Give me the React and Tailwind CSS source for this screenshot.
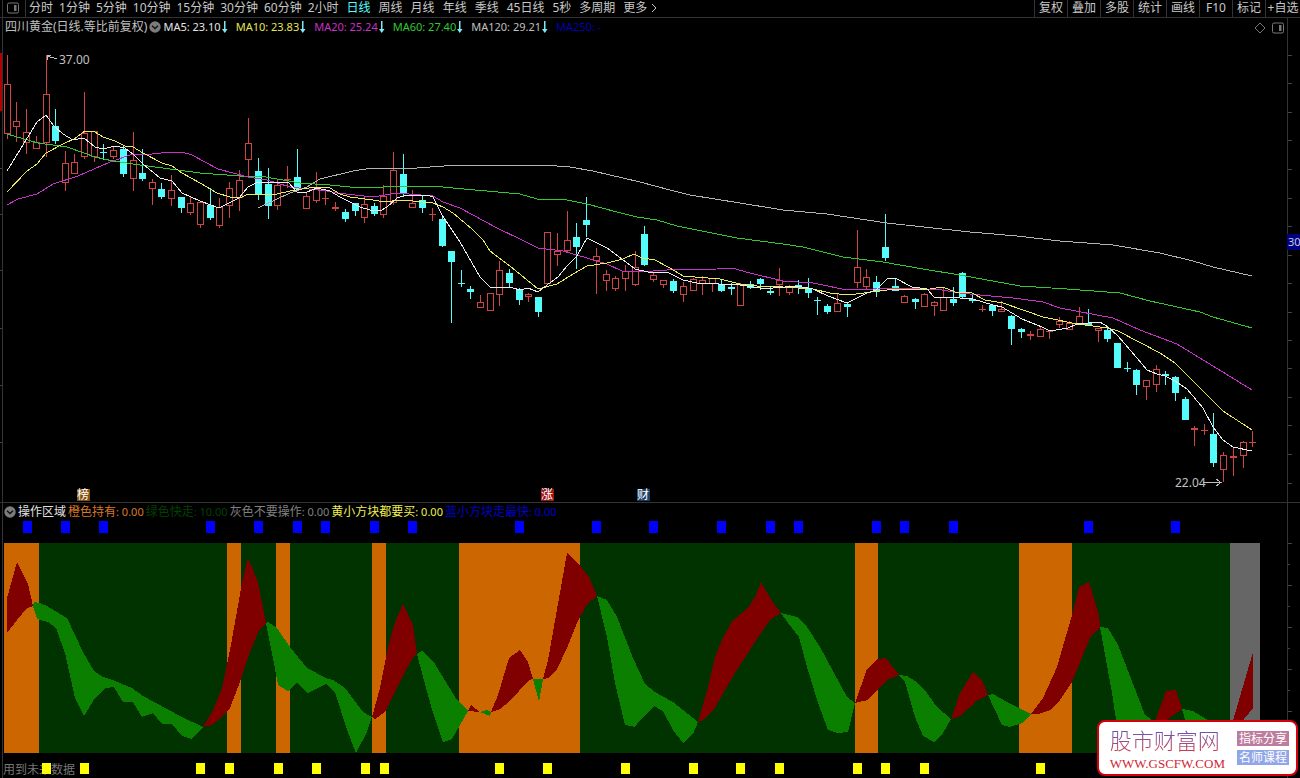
import React from 'react';
import { clsx } from 'clsx';

const RED = '#cf4444';
const CYAN = '#54fcfc';

const MINUTE_TABS = ['分时', '1分钟', '5分钟', '10分钟', '15分钟', '30分钟', '60分钟', '2小时'];
const PERIOD_TABS = ['日线', '周线', '月线', '年线', '季线', '45日线', '5秒', '多周期'];
const TOOLS = ['复权', '叠加', '多股', '统计', '画线', 'F10', '标记', '+自选'];

const AVERAGES = [
  { label: 'MA5: 23.10', color: 'text-[#e6e6e6]', arrow: true },
  { label: 'MA10: 23.83', color: 'text-[#e6e650]', arrow: true },
  { label: 'MA20: 25.24', color: 'text-[#c832c8]', arrow: true },
  { label: 'MA60: 27.40', color: 'text-[#32c832]', arrow: true },
  { label: 'MA120: 29.21', color: 'text-[#c0c0c0]', arrow: true },
  { label: 'MA250: -', color: 'text-[#0000b4]', arrow: false },
];

const SIGNALS = [
  { label: '橙色持有', value: '0.00', color: 'text-[#d97a26]' },
  { label: '绿色快走', value: '10.00', color: 'text-[#004000]' },
  { label: '灰色不要操作', value: '0.00', color: 'text-[#808080]' },
  { label: '黄小方块都要买', value: '0.00', color: 'text-[#f0f050]' },
  { label: '蓝小方块走最快', value: '0.00', color: 'text-[#0000c8]' },
];

// [x, high, body top, body bottom, low, 1 = rising / 0 = falling]
const CANDLES = [
  [7, 55, 84, 134, 139, 1], [16, 102, 121, 127, 142, 1], [26, 109, 132, 143, 154, 1],
  [36, 136, 142, 149, 149, 1], [46, 55, 94, 143, 157, 1], [55, 109, 126, 141, 144, 0],
  [65, 151, 163, 183, 191, 1], [74, 154, 162, 174, 174, 1], [84, 92, 133, 157, 159, 1],
  [94, 131, 131, 157, 162, 1], [103, 144, 152, 153, 160, 0], [113, 147, 150, 157, 159, 1],
  [123, 146, 149, 174, 177, 0], [133, 132, 160, 179, 191, 1], [142, 149, 173, 179, 181, 0],
  [152, 179, 182, 189, 205, 1], [161, 183, 189, 197, 199, 0], [171, 175, 190, 199, 206, 1],
  [181, 197, 197, 208, 213, 0], [190, 197, 203, 213, 215, 1], [200, 201, 202, 225, 228, 1],
  [210, 188, 205, 218, 220, 0], [219, 198, 207, 226, 228, 1], [229, 182, 188, 206, 218, 1],
  [239, 170, 180, 198, 211, 1], [248, 118, 143, 160, 178, 1], [258, 158, 171, 194, 200, 0],
  [268, 168, 184, 206, 219, 0], [277, 180, 185, 206, 210, 1], [287, 166, 179, 180, 188, 1],
  [297, 149, 177, 189, 189, 0], [306, 193, 196, 209, 209, 1], [316, 172, 189, 201, 203, 1],
  [325, 190, 198, 199, 205, 1], [335, 202, 207, 209, 211, 1], [345, 209, 212, 219, 222, 0],
  [355, 203, 203, 211, 216, 0], [364, 196, 204, 218, 223, 1], [374, 203, 206, 214, 216, 0],
  [383, 185, 196, 215, 218, 1], [393, 152, 170, 203, 205, 1], [403, 154, 174, 193, 197, 0],
  [412, 190, 203, 208, 208, 1], [422, 196, 200, 208, 213, 0], [432, 208, 214, 215, 221, 1],
  [442, 217, 219, 246, 247, 0], [451, 251, 251, 262, 323, 0], [461, 270, 283, 284, 287, 0],
  [470, 286, 289, 292, 299, 0], [480, 295, 302, 308, 308, 1], [490, 293, 293, 311, 311, 1],
  [499, 261, 270, 295, 306, 1], [509, 269, 273, 283, 287, 0], [519, 288, 290, 300, 305, 0],
  [528, 293, 294, 297, 302, 1], [538, 297, 297, 312, 317, 0], [547, 232, 232, 284, 284, 1],
  [557, 233, 251, 255, 266, 1], [567, 211, 240, 251, 252, 1], [576, 223, 237, 247, 269, 0],
  [586, 197, 220, 225, 237, 0], [596, 248, 256, 261, 294, 1], [606, 270, 274, 281, 291, 1],
  [615, 276, 278, 289, 291, 1], [625, 265, 271, 279, 291, 1], [635, 251, 267, 285, 286, 1],
  [644, 226, 234, 265, 266, 0], [653, 272, 275, 280, 282, 1], [663, 280, 280, 285, 288, 1],
  [673, 279, 281, 291, 293, 0], [683, 282, 286, 295, 302, 1], [693, 278, 279, 291, 291, 1],
  [702, 276, 280, 284, 295, 1], [712, 278, 278, 284, 292, 1], [721, 279, 284, 291, 292, 0],
  [731, 283, 287, 289, 295, 0], [740, 283, 284, 306, 306, 1], [750, 281, 284, 288, 289, 0],
  [760, 278, 279, 284, 290, 0], [770, 286, 291, 293, 295, 0], [779, 268, 280, 285, 296, 1],
  [789, 285, 287, 293, 295, 1], [798, 280, 285, 288, 294, 0], [808, 278, 289, 293, 298, 0],
  [817, 297, 300, 301, 315, 0], [827, 304, 306, 312, 314, 0], [837, 293, 303, 312, 312, 1],
  [847, 302, 304, 307, 317, 0], [857, 230, 267, 283, 288, 1], [866, 269, 277, 287, 290, 1],
  [876, 276, 282, 292, 297, 0], [885, 214, 247, 258, 261, 0], [895, 278, 286, 291, 291, 0],
  [904, 295, 296, 303, 303, 1], [915, 298, 299, 302, 309, 0], [924, 293, 294, 307, 307, 1],
  [934, 301, 302, 306, 316, 1], [943, 288, 297, 311, 311, 1], [953, 287, 299, 303, 306, 0],
  [962, 272, 273, 297, 299, 0], [972, 293, 299, 301, 303, 0], [982, 305, 309, 310, 312, 1],
  [992, 304, 305, 311, 316, 0], [1001, 301, 309, 312, 312, 1], [1011, 315, 316, 329, 345, 0],
  [1021, 328, 329, 332, 338, 0], [1030, 331, 334, 336, 340, 1], [1040, 327, 329, 337, 337, 1],
  [1049, 330, 331, 332, 339, 1], [1059, 317, 321, 325, 328, 1], [1069, 321, 323, 330, 330, 1],
  [1079, 307, 316, 325, 325, 1], [1088, 309, 323, 325, 326, 0], [1098, 328, 328, 331, 342, 1],
  [1107, 328, 330, 339, 342, 0], [1117, 343, 343, 368, 368, 0], [1127, 362, 368, 369, 372, 0],
  [1136, 369, 370, 385, 395, 0], [1146, 380, 380, 387, 400, 1], [1156, 365, 369, 385, 392, 1],
  [1165, 371, 374, 376, 385, 0], [1175, 376, 377, 393, 401, 0], [1185, 397, 399, 420, 420, 0],
  [1194, 426, 428, 430, 446, 1], [1204, 424, 430, 431, 435, 1], [1213, 413, 434, 463, 467, 0],
  [1223, 452, 455, 470, 482, 1], [1233, 447, 456, 458, 476, 1], [1243, 441, 442, 456, 468, 1],
  [1252, 431, 442, 443, 447, 1],
];

const LINES = [
  {
    name: 'MA120',
    stroke: '#b4b4b4',
    points:
      '258,208 277,199 290,193 307,187 320,179 353,171 372,168 417,168 457,165 543,165 570,167 593,171 610,175 640,182 670,190 690,195 740,203 783,210 827,214 887,223 970,232 1017,236 1060,241 1113,245 1160,253 1193,261 1213,267 1252,276',
  },
  {
    name: 'MA60',
    stroke: '#32c832',
    points:
      '7,134 38,143 67,147 95,157 113,161 140,165 200,173 240,176 260,176 300,183 330,185 350,187 383,187 413,186 433,186 453,188 520,194 537,199 567,200 587,204 617,212 637,217 657,220 677,226 737,238 783,244 803,247 843,257 883,262 923,269 960,275 1020,286 1067,289 1120,293 1150,301 1200,312 1213,317 1252,328',
  },
  {
    name: 'MA20',
    stroke: '#c832c8',
    points:
      '7,205 18,199 37,194 53,184 78,176 110,162 133,154 152,154 170,152 182,152 192,155 218,169 233,173 248,177 267,180 290,187 327,191 337,193 373,197 397,193 433,196 443,202 460,208 497,228 522,240 538,248 563,251 587,258 607,264 622,271 640,272 667,270 717,269 732,268 750,273 783,281 813,283 847,290 900,288 942,290 960,293 980,295 1013,298 1043,302 1060,308 1113,318 1140,330 1177,344 1213,366 1252,390',
  },
  {
    name: 'MA10',
    stroke: '#ecec5a',
    points:
      '7,192 27,171 37,164 46,153 63,144 74,139 85,131 95,132 103,137 115,141 125,146 133,147 143,153 162,163 172,166 182,173 200,183 217,193 230,197 240,198 248,194 277,194 290,191 315,187 330,188 340,194 350,197 373,200 385,202 400,200 413,201 433,203 443,207 453,213 472,229 483,240 490,251 510,266 538,289 557,284 573,274 587,266 607,263 623,259 634,254 642,258 655,260 670,268 683,276 720,279 740,284 757,286 783,287 813,289 830,293 848,295 887,290 930,289 943,287 955,292 972,293 985,300 1003,303 1043,317 1077,324 1108,328 1118,331 1160,353 1175,363 1223,411 1252,430',
  },
  {
    name: 'MA5',
    stroke: '#ececec',
    points:
      '7,171 26,140 37,122 46,115 53,125 63,134 73,140 84,138 95,147 103,149 115,146 125,148 133,154 143,164 160,178 172,181 182,193 200,201 219,208 239,198 248,187 258,182 288,182 297,192 307,192 317,188 330,191 340,197 360,207 370,210 380,211 387,207 397,198 407,195 427,195 433,197 442,215 460,242 480,277 490,287 513,288 520,290 528,288 538,292 547,285 558,277 567,266 577,256 587,238 607,248 622,259 635,269 648,272 667,272 683,280 697,283 740,285 760,288 773,288 797,286 813,289 828,296 847,303 867,293 876,290 887,279 895,278 912,287 927,289 934,297 960,298 973,299 993,305 1002,307 1012,313 1022,319 1042,327 1050,331 1068,328 1077,324 1100,322 1108,327 1118,336 1137,358 1147,370 1157,374 1165,376 1175,381 1187,389 1203,408 1213,427 1223,440 1233,447 1252,451',
  },
];

const BANDS = [
  [4, 39, '#cc6600'],
  [227, 241, '#cc6600'],
  [276, 290, '#cc6600'],
  [372, 386, '#cc6600'],
  [459, 580, '#cc6600'],
  [855, 878, '#cc6600'],
  [1019, 1072, '#cc6600'],
  [1230, 1260, '#666666'],
];

const RISING = [
  '7,598 17,562 28,584 33,606 27,608 17,620 7,633',
  '203,727 213,710 222,688 230,650 242,583 248,558 258,582 266,623 259,630 248,657 240,682 230,708 222,717 212,725',
  '372,717 380,688 388,647 395,622 403,604 413,625 417,654 413,657 402,678 385,712 375,719',
  '468,711 471,705 480,712',
  '491,712 498,695 509,658 520,650 528,662 533,679 529,680 510,701 500,709',
  '543,679 548,660 567,553 578,563 589,577 597,596 587,604 577,623 567,648 557,669 548,678',
  '698,722 708,687 715,657 722,640 732,621 748,608 755,597 761,582 772,601 781,613 770,620 755,642 735,673 713,711 703,720',
  '855,703 867,669 878,659 886,658 899,675 887,680 868,700',
  '951,719 960,693 973,672 982,680 988,695 978,700 960,716',
  '1031,714 1043,698 1057,667 1072,615 1079,587 1089,582 1099,615 1100,627 1090,638 1072,682 1060,700 1050,710 1038,714',
  '1155,721 1166,691 1176,690 1182,709 1167,720 1158,726',
  '1232,724 1253,652 1253,708 1240,724',
];

const FALLING = [
  '33,606 34,602 40,603 47,606 67,618 83,652 94,671 103,677 115,681 132,688 143,696 182,717 203,727 192,739 182,736 172,724 162,724 153,713 142,717 133,702 123,702 114,687 105,688 95,698 84,716 75,698 65,653 56,628 48,622 37,619',
  '266,623 268,622 277,628 290,647 307,668 328,679 333,680 345,688 363,712 372,717 367,732 356,753 347,730 335,692 326,684 308,693 297,683 288,691 278,685 272,653',
  '417,654 422,651 433,661 457,700 468,711 452,739 443,742 433,713 423,677',
  '480,712 487,710 491,712 490,716',
  '533,679 543,679 539,702',
  '597,596 607,600 617,617 633,658 645,684 655,692 673,702 698,722 693,734 683,743 673,730 663,711 654,706 640,720 635,727 625,725 615,683 607,637',
  '781,613 797,617 807,627 820,647 847,697 855,703 848,732 838,733 828,730 818,703 807,667 799,637 788,623',
  '899,675 907,676 917,682 927,693 937,707 951,719 943,733 934,742 923,736 915,717 905,682',
  '988,695 993,694 1007,702 1031,714 1022,723 1010,727 1002,725',
  '1100,627 1108,628 1118,645 1145,715 1155,722 1117,726 1112,693',
  '1182,709 1193,711 1208,720 1212,726 1187,726',
];

const BLUE_MARKS = [27, 65, 103, 210, 258, 297, 325, 374, 412, 519, 596, 653, 721, 770, 798, 876, 904, 953, 1088, 1175];
const YELLOW_MARKS = [46, 84, 200, 229, 278, 316, 365, 384, 499, 547, 625, 693, 740, 779, 857, 885, 924, 1040];

const BADGES = [
  { x: 77, text: '榜', fill: '#84500f' },
  { x: 541, text: '涨', fill: '#a01414' },
  { x: 637, text: '财', fill: '#1c3f68' },
];

const SVG_LATIN = "font-['Noto_Sans','Noto_Sans_CJK_SC',sans-serif]";

const Candle = ({ data }) => {
  const [x, high, top, bottom, low, rising] = data;
  if (!rising) {
    return (
      <g fill={CYAN}>
        <rect x={x} y={high} width="1" height={low - high} />
        <rect x={x - 3} y={top} width="7" height={bottom - top} />
      </g>
    );
  }
  return (
    <g fill={RED}>
      <rect x={x} y={high} width="1" height={top - high} />
      <rect x={x} y={bottom} width="1" height={low - bottom} />
      {bottom - top < 2 ? (
        <rect x={x - 3} y={top} width="7" height="1" />
      ) : (
        <rect x={x - 2.5} y={top + 0.5} width="6" height={bottom - top - 1} fill="none" stroke={RED} />
      )}
    </g>
  );
};

const PanelIcon = ({ className }) => (
  <svg viewBox="0 0 12 12" className={clsx('h-3 w-3 shrink-0', className)} fill="none" stroke="currentColor">
    <rect x="0.5" y="1" width="11" height="10" rx="1.5" />
    <rect x="7" y="3" width="2.5" height="6" fill="currentColor" stroke="none" />
  </svg>
);

const ChevronBadge = () => (
  <svg viewBox="0 0 12 12" className="h-3 w-3 shrink-0">
    <circle cx="6" cy="6" r="5.7" fill="#7c7c7c" />
    <path d="M3 4.8 L6 7.6 L9 4.8" fill="none" stroke="#111" strokeWidth="1.4" />
  </svg>
);

const DownArrow = () => (
  <svg viewBox="0 0 8 12" className="h-3 w-2 shrink-0" fill="#7fe9f5">
    <rect x="3" y="0" width="1.5" height="10" />
    <path d="M1 8 H6.5 L3.75 12 Z" />
  </svg>
);

const Toolbar = () => (
  <nav className="flex h-[18px] items-stretch justify-between overflow-hidden border-b border-[#333] text-[#c8c8c8]">
    <div className="flex items-start">
      <button className="ml-0.5 mr-[3px] flex h-full w-6 items-center border-x border-[#333] pb-0.5 pl-1">
        <PanelIcon className="text-[#777]" />
      </button>
      <div className="mr-2 flex gap-1.5">
        {MINUTE_TABS.map((tab) => (
          <button key={tab} className="leading-4 hover:text-white">{tab}</button>
        ))}
      </div>
      <div className="flex gap-2">
        {PERIOD_TABS.map((tab) => (
          <button key={tab} className={clsx('leading-4 hover:text-white', tab === '日线' && 'text-[#54fcfc]')}>
            {tab}
          </button>
        ))}
        <button className="flex items-center gap-1 leading-4">
          更多
          <svg viewBox="0 0 6 10" className="h-2.5 w-1.5" fill="none" stroke="currentColor">
            <path d="M1 1 L5 5 L1 9" />
          </svg>
        </button>
      </div>
    </div>
    <div className="flex">
      {TOOLS.map((tool) => (
        <button
          key={tool}
          className="flex w-[33px] justify-center whitespace-nowrap border-l border-[#333] leading-4 last:w-[35px] hover:text-white"
        >
          {tool}
        </button>
      ))}
    </div>
  </nav>
);

const PriceHeader = () => (
  <div className="ml-0.5 flex h-[19px] items-stretch border-l border-[#333]">
    <div className="flex flex-1 items-center pb-0.5 pl-0.5">
      <h1 className="mr-0.5 text-[#c0c0c0]">四川黄金(日线.等比前复权)</h1>
      <button aria-label="指标菜单"><ChevronBadge /></button>
      <div className="ml-0.5 flex items-center gap-[7px] text-[11px]">
        {AVERAGES.map((avg) => (
          <span key={avg.label} className={clsx('flex items-center', avg.color)}>
            {avg.label}
            {avg.arrow && <DownArrow />}
          </span>
        ))}
      </div>
    </div>
    <div className="flex items-center gap-1.5 pr-[3px] text-[#777]">
      <svg viewBox="0 0 12 12" className="h-3 w-3" fill="none" stroke="currentColor">
        <path d="M6 1 L11 6 L6 11 L1 6 Z" />
      </svg>
      <PanelIcon />
    </div>
    <div className="w-[13px] border-l border-[#333]" />
  </div>
);

const PriceChart = () => (
  <svg viewBox="0 37 1300 465" className={clsx('block w-full overflow-visible', SVG_LATIN)} shapeRendering="crispEdges">
    <rect x="2" y="37" width="1" height="465" fill="#333" />
    <rect x="1287" y="37" width="1" height="465" fill="#333" />
    <rect x="0" y="53" width="2" height="58" fill="#b40000" />
    {[168, 214, 270, 328, 385, 442].map((y) => (
      <rect key={y} x="0" y={y} width="2" height="1" fill="#444" />
    ))}
    {[55, 83, 112, 140, 169, 198, 226, 255, 283, 312, 340, 368, 397, 425, 454, 483].map((y) => (
      <rect key={y} x="1288" y={y} width="4" height="1" fill="#444" />
    ))}

    {CANDLES.map((candle) => (
      <Candle key={candle[0]} data={candle} />
    ))}
    {LINES.map((line) => (
      <polyline key={line.name} points={line.points} fill="none" stroke={line.stroke} />
    ))}

    {/* high / low annotations */}
    <path d="M57 59 L47 56 M47 60 V55 M47 55 H51" fill="none" stroke="#c0c0c0" />
    <text x="59" y="64" fontSize="12" fill="#c0c0c0">37.00</text>
    <text x="1175" y="487" fontSize="12" fill="#c0c0c0">22.04</text>
    <path d="M1203 482.5 H1221 M1216 479 L1221 482.5 L1216 486" fill="none" stroke="#c0c0c0" />

    <rect x="1287" y="234" width="13" height="16" fill="#000080" />
    <text x="1288" y="246" fontSize="11" fill="#c8c8e8">30</text>

    {BADGES.map((badge) => (
      <g key={badge.text}>
        <rect x={badge.x} y="489" width="13" height="12" fill={badge.fill} />
        <text x={badge.x} y="499" fontSize="12" fill="#fff">{badge.text}</text>
      </g>
    ))}
  </svg>
);

const SignalHeader = () => (
  <div className="flex h-[17px] items-stretch border-t border-[#333] pl-0.5">
    <div className="flex flex-1 items-center gap-0.5 border-l border-[#333] pl-px pt-px">
      <button aria-label="指标菜单"><ChevronBadge /></button>
      <h2 className="text-[#e0e0e0]">操作区域</h2>
      {SIGNALS.map((signal) => (
        <span key={signal.label} className={clsx('whitespace-nowrap', signal.color)}>
          {signal.label}<span className="text-[11px]">: {signal.value}</span>
        </span>
      ))}
    </div>
    <div className="w-[13px] border-l border-[#333]" />
  </div>
);

const SignalChart = () => (
  <svg viewBox="0 519 1300 259" className={clsx('block w-full', SVG_LATIN)} shapeRendering="crispEdges">
    <rect x="2" y="519" width="1" height="259" fill="#333" />
    <rect x="1287" y="519" width="1" height="259" fill="#333" />
    {[543, 585, 627, 669, 711].map((y) => (
      <rect key={y} x="1288" y={y} width="4" height="1" fill="#444" />
    ))}
    {[564, 606, 648, 690].map((y) => (
      <rect key={y} x="1288" y={y} width="2" height="1" fill="#444" />
    ))}

    <rect x="4" y="543" width="1256" height="210" fill="#003300" />
    {BANDS.map(([from, to, fill]) => (
      <rect key={from} x={from} y="543" width={to - from} height="210" fill={fill} />
    ))}
    {RISING.map((points) => (
      <polygon key={points} points={points} fill="#800000" />
    ))}
    {FALLING.map((points) => (
      <polygon key={points} points={points} fill="#0b8000" />
    ))}

    <text x="3" y="774" fontSize="12" fill="#777">用到未来数据</text>
    {BLUE_MARKS.map((x) => (
      <rect key={x} x={x - 4} y="521" width="9" height="12" fill="#0000ff" />
    ))}
    {YELLOW_MARKS.map((x) => (
      <rect key={x} x={x - 4} y="763" width="9" height="11" fill="#ffff00" />
    ))}
  </svg>
);

const SiteBadge = () => (
  <a
    href="#"
    className="absolute bottom-0.5 right-0.5 flex items-center gap-3 rounded-lg border-2 border-[#d4000c] bg-white py-0.5 pl-[11px] pr-[7px]"
  >
    <span className="flex flex-col">
      <span className="bg-gradient-to-b from-[#4a4ad0] to-[#d8202c] bg-clip-text text-[22px] font-light leading-8 text-transparent">
        股市财富网
      </span>
      <span className="font-['Liberation_Serif',serif] text-[13px] leading-4 text-[#d02838]">WWW.GSCFW.COM</span>
    </span>
    <span className="flex flex-col gap-1 text-[12px] leading-[15px] text-white">
      <span className="block h-[15px] px-0.5 bg-[#bd7c9e]">指标分享</span>
      <span className="block h-[15px] px-0.5 bg-[#90a6e8]">名师课程</span>
    </span>
  </a>
);

export default function App() {
  return (
    <main className="min-h-screen bg-black font-['Noto_Sans','Noto_Sans_CJK_SC',sans-serif] text-[12px] leading-4">
      <div className="relative overflow-hidden">
        <Toolbar />
        <PriceHeader />
        <PriceChart />
        <SignalHeader />
        <SignalChart />
        <SiteBadge />
      </div>
    </main>
  );
}
